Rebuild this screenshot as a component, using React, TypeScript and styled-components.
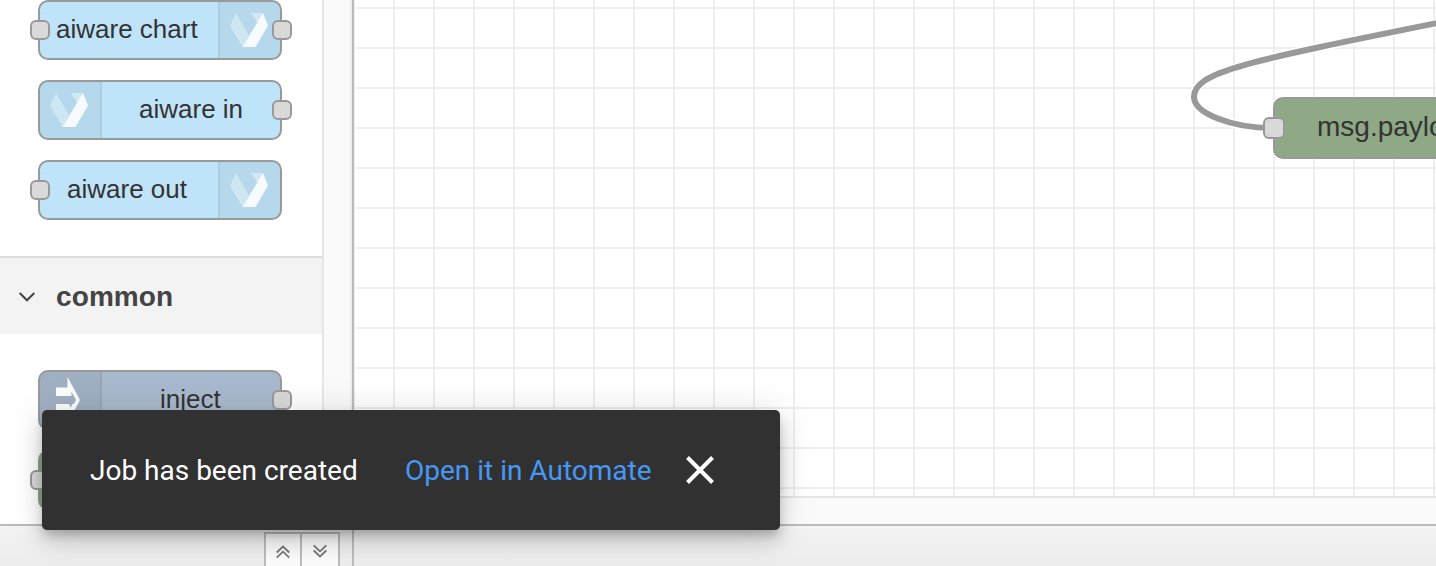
import React from "react";
import styled, { createGlobalStyle } from "styled-components";

const GlobalStyle = createGlobalStyle`
  * { box-sizing: border-box; }
  body { margin: 0; overflow: hidden; font-family: "Liberation Sans", Arial, sans-serif; }
`;

const Editor = styled.div`
  position: relative;
  display: flex;
  flex-direction: column;
  width: 1436px;
  height: 566px;
  overflow: hidden;
  background: #fff;
`;

const Main = styled.div`
  display: flex;
  height: 526px;
  border-bottom: 2px solid #bbb;
`;

const Palette = styled.aside`
  display: flex;
  flex-direction: column;
  width: 324px;
  background: #fff;
  border-right: 2px solid #e6e6e6;
  overflow: hidden;
`;

const NodeList = styled.div<{ $top: number; $bottom: number }>`
  display: flex;
  flex-direction: column;
  gap: 20px;
  padding: ${(p) => p.$top}px 0 ${(p) => p.$bottom}px 38px;
`;

const PaletteNode = styled.div<{ $color: string; $reverse?: boolean }>`
  position: relative;
  flex: none;
  display: flex;
  flex-direction: ${(p) => (p.$reverse ? "row-reverse" : "row")};
  width: 244px;
  height: 60px;
  border: 2px solid #999;
  border-radius: 10px;
  background: ${(p) => p.$color};
`;

const IconCell = styled.div<{ $right?: boolean }>`
  width: 62px;
  height: 56px;
  background: rgba(0, 0, 0, 0.05);
  border-${(p) => (p.$right ? "left" : "right")}: 2px solid rgba(0, 0, 0, 0.05);
  border-radius: ${(p) => (p.$right ? "0 8px 8px 0" : "8px 0 0 8px")};

  svg { display: block; }
`;

const NodeLabel = styled.div<{ $indent: number }>`
  flex: 1;
  padding-left: ${(p) => p.$indent}px;
  font-size: 26px;
  line-height: 54px;
  color: #333;
  white-space: nowrap;
`;

const Port = styled.span<{ $side: "left" | "right" }>`
  position: absolute;
  top: 18px;
  ${(p) => (p.$side === "left" ? "left: -10px" : "right: -12px")};
  width: 20px;
  height: 20px;
  border: 2px solid #999;
  border-radius: 6px;
  background: #d9d9d9;
`;

const CategoryHeader = styled.div`
  flex: none;
  display: flex;
  align-items: center;
  gap: 20px;
  height: 78px;
  padding: 2px 0 0 18px;
  border-top: 2px solid #ddd;
  background: #f3f3f3;
  font-size: 28px;
  font-weight: bold;
  letter-spacing: 0.1px;
  color: #444;
`;

const Separator = styled.div`
  width: 30px;
  background: #fafafa;
  border-right: 2px solid #bbb;
  box-shadow: inset -2px 0 0 #eee;
`;

const Workspace = styled.div`
  flex: 1;
  display: flex;
  flex-direction: column;
`;

const Canvas = styled.div`
  position: relative;
  height: 498px;
  overflow: hidden;
  border-bottom: 2px solid #e6e6e6;
  background-color: #fff;
  background-image: linear-gradient(to right, #eee 2px, transparent 2px),
    linear-gradient(to bottom, #eee 2px, transparent 2px);
  background-size: 40px 40px;
  background-position: 39px 0, 0 7px;
`;

const ScrollTrack = styled.div`
  flex: 1;
  background: #fafafa;
`;

const Wire = styled.svg`
  position: absolute;
  left: 0;
  top: 0;
`;

const FlowNode = styled.div`
  position: absolute;
  left: 919px;
  top: 97px;
  width: 300px;
  height: 62px;
  padding-left: 42px;
  border: 2px solid #999;
  border-radius: 10px;
  background: #8fa885;
  font-size: 28px;
  line-height: 56px;
  color: #333;
`;

const FlowPort = styled(Port)`
  left: -12px;
  width: 22px;
  height: 22px;
`;

const Footer = styled.footer`
  display: flex;
  height: 40px;
  background: linear-gradient(#f3f3f3, #ececec);
`;

const FooterLeft = styled.div`
  display: flex;
  justify-content: flex-end;
  width: 354px;
  padding: 6px 12px 0 0;
  border-right: 2px solid #bbb;
`;

const FooterButton = styled.button<{ $last?: boolean }>`
  display: flex;
  justify-content: center;
  width: ${(p) => (p.$last ? 40 : 36)}px;
  height: 40px;
  padding: 10px 0 0;
  border: 2px solid #bbb;
  border-right-width: ${(p) => (p.$last ? 2 : 0)}px;
  background: #fafafa;

  svg { flex: none; }
`;

const Toast = styled.div`
  position: absolute;
  left: 42px;
  top: 410px;
  display: flex;
  align-items: center;
  width: 738px;
  height: 120px;
  padding: 0 60px 0 48px;
  border-radius: 5px;
  background: #313131;
  color: #fff;
  font-family: Roboto, sans-serif;
  font-size: 28px;
  box-shadow: 0 6px 10px -2px rgba(0, 0, 0, 0.2), 0 12px 20px rgba(0, 0, 0, 0.14),
    0 2px 36px rgba(0, 0, 0, 0.12);
`;

const Message = styled.span`
  flex: none;
  width: 315px;
  white-space: nowrap;
`;

const ToastLink = styled.a`
  flex: none;
  width: 277px;
  color: #4797f5;
  white-space: nowrap;
`;

const Close = styled.svg`
  flex: none;
`;

const AiwareIcon = () => (
  <svg width="60" height="56" viewBox="0 0 60 56">
    <path d="M16 11 L10 23.500 L22.500 45 L29 33.500 Z" fill="#fff" opacity=".36" />
    <path d="M31 11 H43 L37.500 21 Z" fill="#fff" opacity=".42" />
    <path d="M43 11 L48 23.500 L35.500 45 H22.500 Z" fill="#fff" opacity=".9" />
  </svg>
);

const InjectIcon = () => (
  <svg width="60" height="56" viewBox="0 0 60 56">
    <path
      d="M27.500 5 L40 28 L27.500 51 V41 H16 V32 H33.800 L36 28 L31.500 19.500 V24 H16 V15.500 H27.500 Z"
      fill="#fff"
      fillOpacity=".97"
    />
    <path d="M29 32 L32 32 L31 36 Z" fill="#a0b0c3" />
  </svg>
);

type Item = {
  id: string;
  label?: string;
  color: string;
  indent: number;
  iconRight?: boolean;
  input?: boolean;
  output?: boolean;
  icon?: React.ReactNode;
};

const aiwareNodes: Item[] = [
  { id: "chart", label: "aiware chart", color: "#bfe4f9", indent: 16, iconRight: true, input: true, output: true, icon: <AiwareIcon /> },
  { id: "in", label: "aiware in", color: "#bfe4f9", indent: 37, output: true, icon: <AiwareIcon /> },
  { id: "out", label: "aiware out", color: "#bfe4f9", indent: 27, iconRight: true, input: true, icon: <AiwareIcon /> },
];

const commonNodes: Item[] = [
  { id: "inject", label: "inject", color: "#a9b9cd", indent: 58, output: true, icon: <InjectIcon /> },
  { id: "sink", color: "#8fa885", indent: 58, iconRight: true, input: true },
];

const PaletteItem = ({ item }: { item: Item }) => (
  <PaletteNode $color={item.color} $reverse={item.iconRight}>
    <IconCell $right={item.iconRight}>{item.icon}</IconCell>
    <NodeLabel $indent={item.indent}>{item.label}</NodeLabel>
    {item.input && <Port $side="left" />}
    {item.output && <Port $side="right" />}
  </PaletteNode>
);

const wirePath = "M919 128 C877 128 840 113 840 97 C840 72 890 62 1086 22.500";

export default function App() {
  return (
    <>
      <GlobalStyle />
      <Editor>
        <Main>
          <Palette>
            <NodeList $top={0} $bottom={36}>
              {aiwareNodes.map((n) => (
                <PaletteItem key={n.id} item={n} />
              ))}
            </NodeList>
            <CategoryHeader>
              <svg width="18" height="12" viewBox="0 0 18 12" fill="none" stroke="#444" strokeWidth="2">
                <path d="M1.700 2 L9 9.300 L16.300 2" />
              </svg>
              common
            </CategoryHeader>
            <NodeList $top={36} $bottom={0}>
              {commonNodes.map((n) => (
                <PaletteItem key={n.id} item={n} />
              ))}
            </NodeList>
          </Palette>
          <Separator />
          <Workspace>
            <Canvas>
              <Wire width="1082" height="200" fill="none">
                <path d={wirePath} stroke="#fff" strokeWidth="9" />
                <path d={wirePath} stroke="#999" strokeWidth="6" />
              </Wire>
              <FlowNode>
                msg.payload
                <FlowPort $side="left" />
              </FlowNode>
            </Canvas>
            <ScrollTrack />
          </Workspace>
        </Main>
        <Footer>
          <FooterLeft>
            <FooterButton aria-label="Collapse all">
              <svg width="16" height="16" viewBox="0 0 16 16" fill="none" stroke="#777" strokeWidth="1.8">
                <path d="M1.700 8.500 L8 2.500 L14.300 8.500 M1.700 13.700 L8 7.700 L14.300 13.700" />
              </svg>
            </FooterButton>
            <FooterButton aria-label="Expand all" $last>
              <svg width="16" height="16" viewBox="0 0 16 16" fill="none" stroke="#777" strokeWidth="1.8">
                <path d="M1.700 1.300 L8 7.300 L14.300 1.300 M1.700 6.500 L8 12.500 L14.300 6.500" />
              </svg>
            </FooterButton>
          </FooterLeft>
        </Footer>
        <Toast>
          <Message>Job has been created</Message>
          <ToastLink>Open it in Automate</ToastLink>
          <Close width="36" height="36" viewBox="0 0 36 36" stroke="#fff" strokeWidth="4">
            <path d="M5.500 5.500 L30.500 30.500 M30.500 5.500 L5.500 30.500" />
          </Close>
        </Toast>
      </Editor>
    </>
  );
}
